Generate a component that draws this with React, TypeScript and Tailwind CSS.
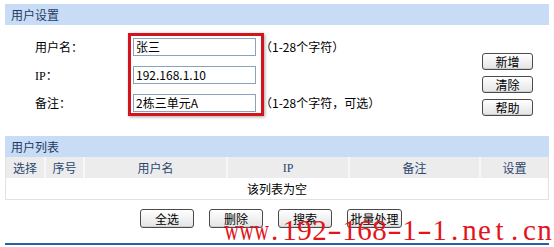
import type { ReactNode } from "react";

const cjk = "font-['Noto_Sans_CJK_SC','Noto_Sans',sans-serif]";

function SectionHeader({ title }: { title: string }) {
  return (
    <div className="flex h-[21px] items-center bg-[#c8dcf6] pl-[6px] leading-none text-[#1e3a64]">
      {title}
    </div>
  );
}

function XpButton({ children, className }: { children: ReactNode; className: string }) {
  return (
    <button
      type="button"
      className={`flex items-center justify-center rounded-[3px] border border-[#4a4a4a] bg-gradient-to-b from-white to-[#e4e4e4] leading-none text-black shadow-[inset_0_-1px_0_#cfcfcf] ${className}`}
    >
      {children}
    </button>
  );
}

function FormRow({ label, value, hint }: { label: ReactNode; value: string; hint?: string }) {
  return (
    <div className="flex h-[18px] items-center">
      <div className="w-[128px] pl-[30px] leading-none">{label}</div>
      <div className="flex h-[18px] w-[123px] items-center border border-[#8aa3bd] bg-white pl-[2px] leading-none">
        {value}
      </div>
      {hint && <div className="ml-[4px] leading-none">{hint}</div>}
    </div>
  );
}

const columns = [
  { title: "选择" },
  { title: "序号" },
  { title: "用户名" },
  { title: "IP", serif: true },
  { title: "备注" },
  { title: "设置" },
];

const watermark = "www.192-168-1-1.net.cn".split("");

export default function App() {
  return (
    <div className={`relative h-[247px] w-[554px] overflow-hidden bg-white text-[12px] ${cjk}`}>
      <div className="px-[5px] pt-[4px]">
        <SectionHeader title="用户设置" />

        <div className="flex h-[111px]">
          <div className="relative flex flex-col gap-[10px] pt-[13px]">
            <FormRow label="用户名：" value="张三" hint="（1-28个字符）" />
            <FormRow
              label={
                <span>
                  <span className="font-['Liberation_Serif',serif]">IP</span>：
                </span>
              }
              value="192.168.1.10"
            />
            <FormRow label="备注：" value="2栋三单元A" hint="（1-28个字符，可选）" />
            <div className="pointer-events-none absolute left-[123px] top-[8px] h-[83px] w-[136px] border-[3px] border-[#d4141d] shadow-[1px_1px_3px_rgba(0,0,0,0.35)]" />
          </div>

          <div className="ml-auto mr-[16px] flex flex-col gap-[6px] pt-[28px]">
            <XpButton className="h-[17px] w-[51px]">新增</XpButton>
            <XpButton className="h-[17px] w-[51px]">清除</XpButton>
            <XpButton className="h-[17px] w-[51px]">帮助</XpButton>
          </div>
        </div>

        <SectionHeader title="用户列表" />

        <div className="border-x border-b border-[#e2e2e2]">
          <div className="grid h-[21px] grid-cols-[38px_39px_143px_122px_131px_1fr] bg-[#ececec] text-[#2b4670]">
            {columns.map((col, i) => (
              <div
                key={col.title}
                className={`flex items-center justify-center leading-none ${i > 0 ? "border-l-2 border-[#f7f7f7]" : ""} ${col.serif ? "font-['Liberation_Serif',serif]" : ""}`}
              >
                {col.title}
              </div>
            ))}
          </div>
          <div className="flex h-[21px] items-center justify-center leading-none text-black">
            该列表为空
          </div>
        </div>

        <div className="mt-[9px] flex gap-[15px] pl-[135px]">
          <XpButton className="h-[19px] w-[54px]">全选</XpButton>
          <XpButton className="h-[19px] w-[54px]">删除</XpButton>
          <XpButton className="h-[19px] w-[54px]">搜索</XpButton>
          <XpButton className="h-[19px] w-[55px]">批量处理</XpButton>
        </div>

        <div className="mt-[15px] h-[2px] bg-[#2262a8]" />
      </div>

      <div className="pointer-events-none absolute left-[222px] top-[216px] flex font-['Liberation_Serif',serif] text-[29px] leading-none text-[#e3141c]">
        {watermark.map((ch, i) => (
          <span
            key={i}
            className={`inline-block w-[15px] text-center ${ch === "w" ? "scale-x-[0.7]" : ""} ${ch === "-" ? "scale-x-150" : ""}`}
          >
            {ch}
          </span>
        ))}
      </div>
    </div>
  );
}
